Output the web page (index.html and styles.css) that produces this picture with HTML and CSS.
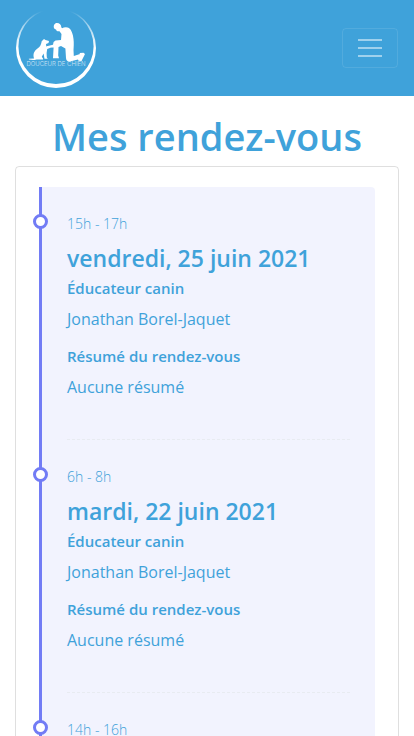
FILE: index.html
```html
<!DOCTYPE html>
<html lang="fr">
<head>
  <meta charset="utf-8">
  <meta name="viewport" content="width=device-width, initial-scale=1">
  <title>Mes rendez-vous</title>
  <link rel="stylesheet" href="styles.css">
</head>
<body>
  <header class="navbar">
    <a class="brand" href="#" aria-label="Douceur de chien">
      <svg class="logo" viewBox="0 0 80 80" aria-hidden="true">
        <defs>
          <linearGradient id="fade" gradientUnits="userSpaceOnUse" x1="0" y1="3" x2="0" y2="40">
            <stop offset="0" stop-color="#fff" stop-opacity="0"/>
            <stop offset="0.35" stop-color="#fff" stop-opacity="0.5"/>
            <stop offset="1" stop-color="#fff"/>
          </linearGradient>
        </defs>
        <path fill="url(#fade)" fill-rule="evenodd" d="M40 0a40 40 0 1 1 0 80a40 40 0 1 1 0-80zM40 0.800a37.600 37.600 0 1 0 0 75.200a37.600 37.600 0 1 0 0-75.200z"/>
        <!-- kneeling owner -->
        <path fill="#fff" d="M41 15C43.500 15 45.300 17 45.300 19.200L46 20.300C48 19 51 18.800 53 20C55.500 22 57 26 57.500 31C58 35 57.700 39 57.500 42L57.800 48L64 46L63.500 45L67.500 44.800L69 46L65.500 53L62.500 52.800L62 51.500L54 53.500C51.500 54 50.200 52.500 50 50L49.400 40.500L45 38L42.500 39L42.200 47.500L43 50.200H37L37.600 39.500L31 39.800L30.600 38.200L37 36.800L37.600 34L39.500 32.500L45 32L45.500 26L43.500 23.200C41.500 23.600 40 22.800 40.200 21.800L38.200 20.500C37 17.500 38.500 15 41 15Z"/>
        <!-- sitting dog -->
        <path fill="#fff" d="M28 31L29.500 32L33 33L32.500 35L30 36L30.300 38.500L34 38.200L34.500 39.800L31.200 41L30.600 45L30.800 49.500L31.800 50.700H28.500L27.600 45.500L25.800 48.800L27 50.500V51.500H20.500C18 52.300 15 52 13 51.500L12.800 50.700L18 50.400C16.800 46.500 18 43 21.500 40.600C24.500 38.500 25.200 36 25.700 33.200Z"/>
        <text class="logo-text" x="40" y="58" text-anchor="middle">DOUCEUR DE CHIEN</text>
      </svg>
    </a>
    <button class="toggler" type="button" aria-label="Ouvrir le menu">
      <svg class="toggler-icon" viewBox="0 0 24 18" aria-hidden="true">
        <path d="M0 1h24M0 9h24M0 17h24" stroke="currentColor" stroke-width="2"/>
      </svg>
    </button>
  </header>

  <main class="page">
    <h1 class="page-title">Mes rendez-vous</h1>
    <section class="card">
      <ul class="timeline">
        <li class="event">
          <p class="event-time">15h - 17h</p>
          <h2 class="event-date">vendredi, 25 juin 2021</h2>
          <h3 class="event-label">Éducateur canin</h3>
          <p class="event-text">Jonathan Borel-Jaquet</p>
          <h3 class="event-label">Résumé du rendez-vous</h3>
          <p class="event-text">Aucune résumé</p>
        </li>
        <li class="event">
          <p class="event-time">6h - 8h</p>
          <h2 class="event-date">mardi, 22 juin 2021</h2>
          <h3 class="event-label">Éducateur canin</h3>
          <p class="event-text">Jonathan Borel-Jaquet</p>
          <h3 class="event-label">Résumé du rendez-vous</h3>
          <p class="event-text">Aucune résumé</p>
        </li>
        <li class="event">
          <p class="event-time">14h - 16h</p>
        </li>
      </ul>
    </section>
  </main>
</body>
</html>
```
FILE: styles.css
```css
*,
*::before {
  box-sizing: border-box;
}

body {
  margin: 0;
  background: #fff;
  color: #3fa2da;
  font-family: "Open Sans", "Noto Sans", sans-serif;
  font-size: 16px;
  line-height: 24px;
}

h1, h2, h3, p, ul {
  margin: 0;
  padding: 0;
}

.navbar {
  display: flex;
  align-items: center;
  justify-content: space-between;
  padding: 8px 16px;
  background: #3fa2da;
}

.brand,
.logo,
.toggler-icon {
  display: block;
}

.logo {
  width: 80px;
  height: 80px;
}

.logo-text {
  fill: #fff;
  fill-opacity: 0.75;
  font-family: Inter, sans-serif;
  font-size: 6px;
  font-weight: 300;
}

.toggler {
  padding: 10px 15px;
  border: 1px solid rgba(255, 255, 255, 0.1);
  border-radius: 4px;
  background: transparent;
  color: rgba(255, 255, 255, 0.5);
}

.toggler-icon {
  width: 24px;
  height: 18px;
}

.page {
  padding: 16px 15px;
}

.page-title {
  margin-bottom: 6px;
  font-size: 38px;
  font-weight: 600;
  line-height: 48px;
  text-align: center;
}

.card {
  padding: 20px 23px;
  border: 1px solid rgba(0, 0, 0, 0.125);
  border-radius: 4px;
}

.timeline {
  padding: 25px;
  border-left: 3px solid #727cf5;
  border-radius: 0 4px 4px 0;
  background: rgba(114, 124, 245, 0.09);
  list-style: none;
}

.event {
  position: relative;
  margin-bottom: 25px;
  padding-bottom: 27px;
  border-bottom: 1px dashed #e8ebf1;
}

.event:last-child {
  margin-bottom: 0;
  border-bottom: 0;
}

.event::before {
  content: "";
  position: absolute;
  top: 2px;
  left: -34px;
  width: 15px;
  height: 15px;
  border: 3px solid #727cf5;
  border-radius: 50%;
  background: #fff;
}

.event-time {
  margin-bottom: 8px;
  font-size: 14px;
  font-weight: 300;
}

.event-date {
  margin-bottom: 4px;
  font-size: 23px;
  font-weight: 600;
  line-height: 28px;
}

.event-label {
  margin-bottom: 7px;
  font-size: 15px;
  font-weight: 600;
}

.event-text {
  margin-bottom: 13px;
}
```
